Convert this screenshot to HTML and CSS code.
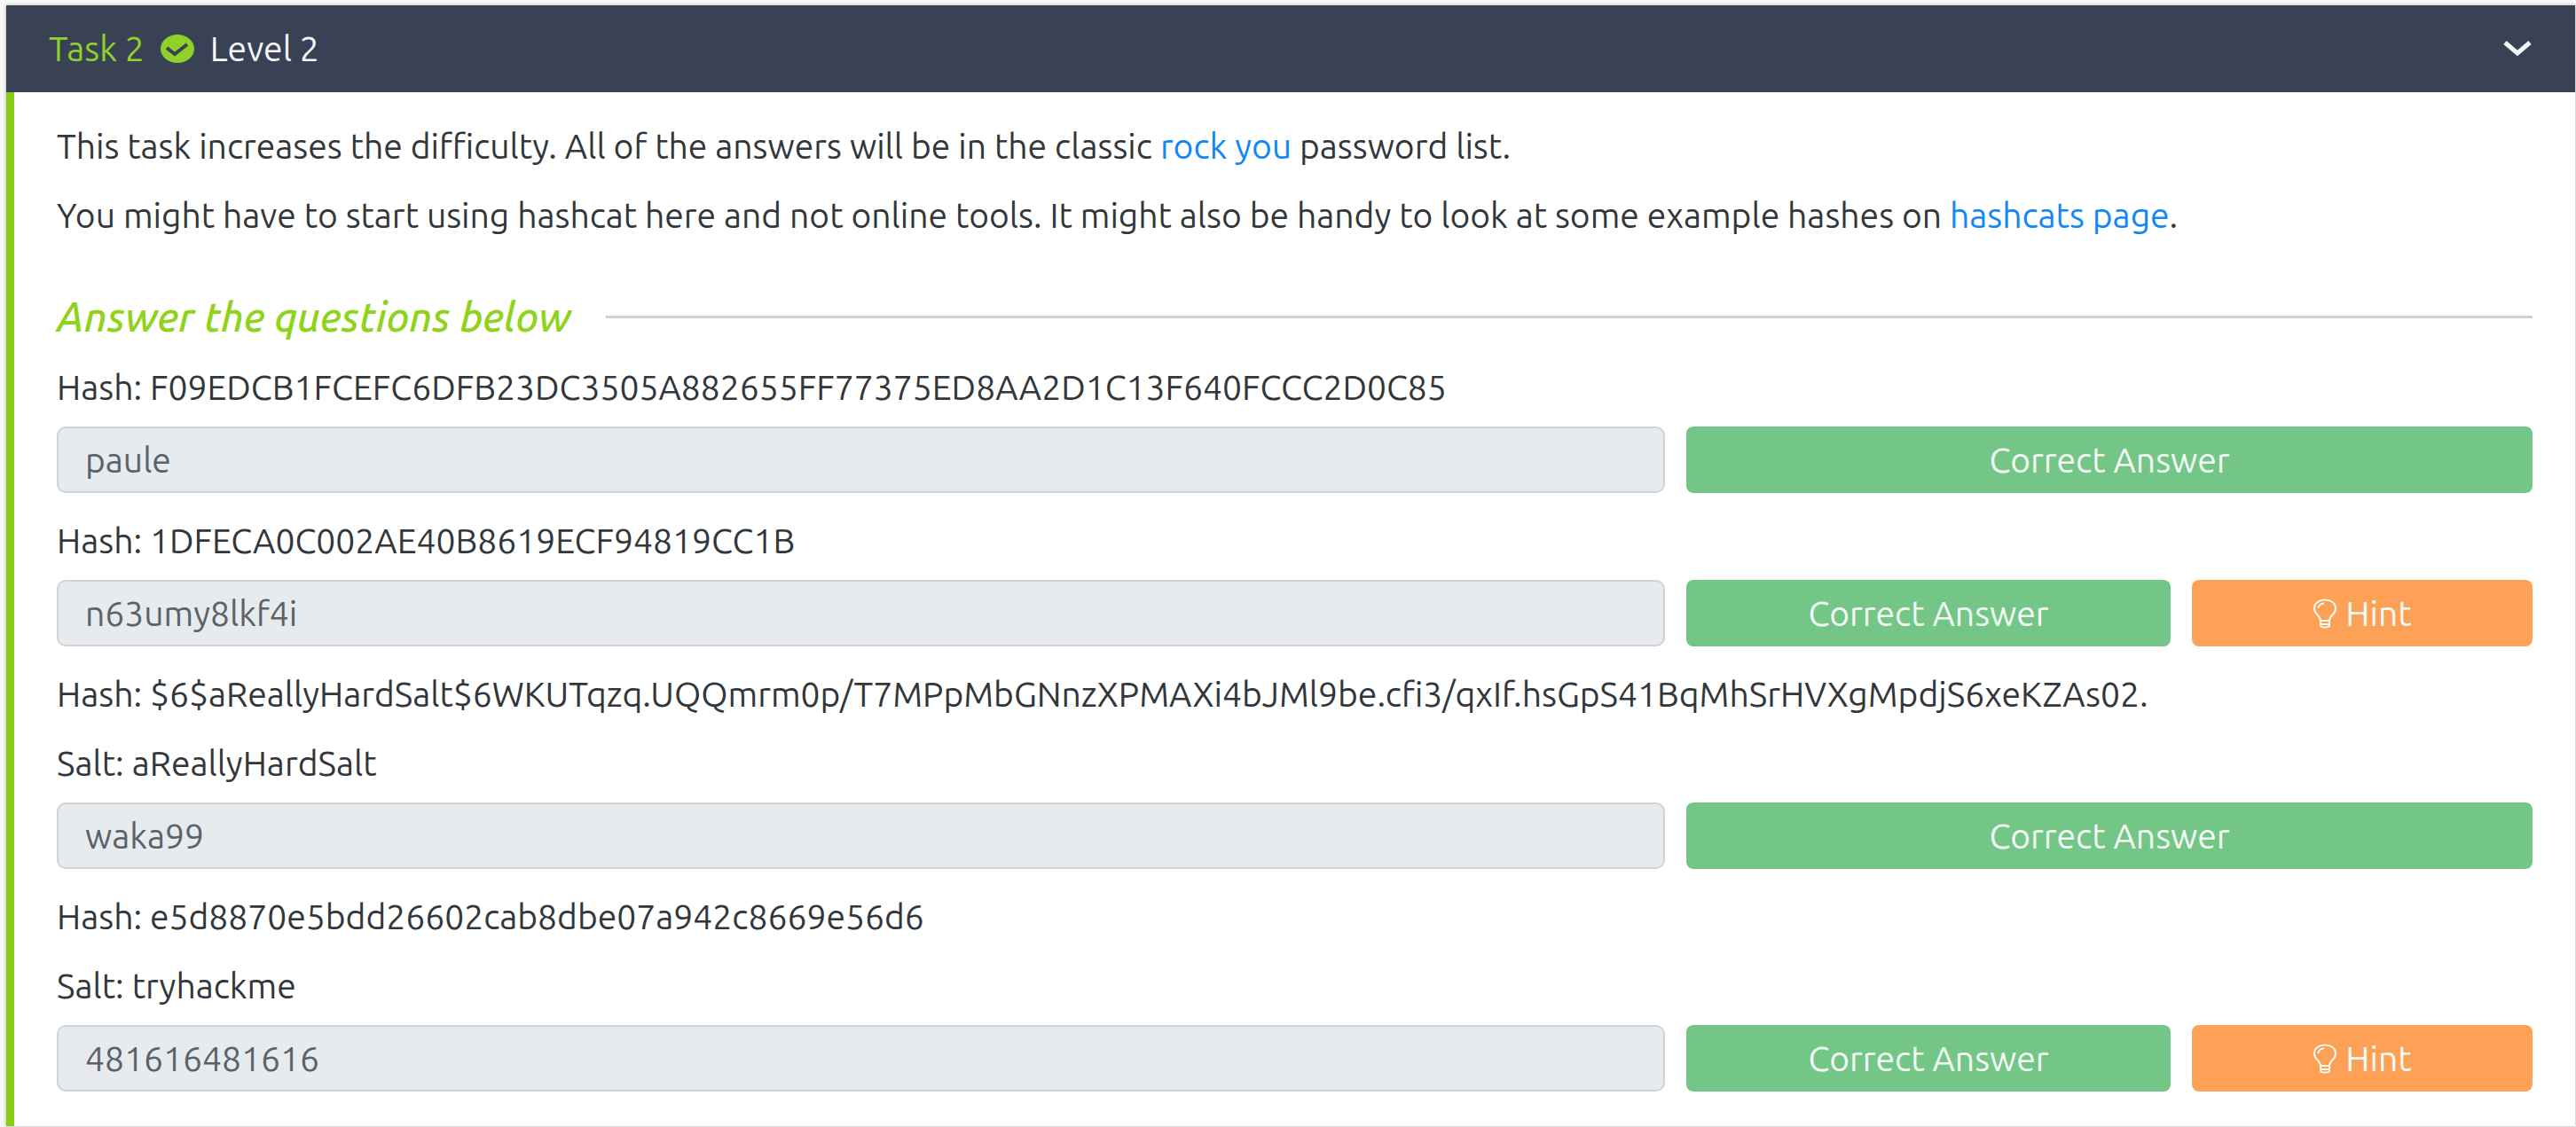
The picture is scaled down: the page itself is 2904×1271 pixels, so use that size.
FILE: index.html
```html
<!DOCTYPE html>
<html lang="en">
<head>
<meta charset="utf-8">
<title>Task 2 - Level 2</title>
<link rel="stylesheet" href="styles.css">
</head>
<body>
<svg class="sprite" aria-hidden="true">
  <symbol id="bulb" viewBox="0 0 28 34">
    <path d="M9 25C9 19 2 18 2 11.500C2 5 7.500 1.500 14 1.500S26 5 26 11.500C26 18 19 19 19 25ZM9 25v5.500q0 2 5 2t5-2V25M9 29h10M6.500 11C6.500 8 9 5.500 13 5.500" fill="none" stroke="currentColor" stroke-width="2"/>
  </symbol>
</svg>
<main class="task">
  <header class="task-header">
    <h1 class="task-title">
      <span class="task-number">Task 2</span>
      <svg class="check" viewBox="0 0 40 32" aria-hidden="true"><ellipse cx="20" cy="16" rx="19" ry="16" fill="currentColor"/><path d="M8 15l9 7 14-11" fill="none" stroke="#384254" stroke-width="4"/></svg>
      <span>Level 2</span>
    </h1>
    <button class="toggle" type="button" aria-label="Collapse task"><svg class="chevron" viewBox="0 0 34 20" aria-hidden="true"><path d="M3 3l14 12L31 3" fill="none" stroke="currentColor" stroke-width="5"/></svg></button>
  </header>
  <div class="task-body">
    <p class="text">This task increases the difficulty. All of the answers will be in the classic <a href="#rockyou">rock you</a> password list.</p>
    <p class="text">You might have to start using hashcat here and not online tools. It might also be handy to look at some example hashes on <a href="#hashcat">hashcats page</a>.</p>
    <h2 class="divider">Answer the questions below</h2>

    <form class="question">
      <label class="text" for="q1">Hash: F09EDCB1FCEFC6DFB23DC3505A882655FF77375ED8AA2D1C13F640FCCC2D0C85</label>
      <div class="row">
        <input class="answer" id="q1" value="paule" readonly>
        <div class="actions"><button class="btn correct" type="button">Correct Answer</button></div>
      </div>
    </form>

    <form class="question">
      <label class="text" for="q2">Hash: 1DFECA0C002AE40B8619ECF94819CC1B</label>
      <div class="row">
        <input class="answer" id="q2" value="n63umy8lkf4i" readonly>
        <div class="actions with-hint"><button class="btn correct" type="button">Correct Answer</button><button class="btn hint" type="button"><svg class="bulb" aria-hidden="true"><use href="#bulb"/></svg>Hint</button></div>
      </div>
    </form>

    <form class="question">
      <label class="text" for="q3">Hash: $6$aReallyHardSalt$6WKUTqzq.UQQmrm0p/T7MPpMbGNnzXPMAXi4bJMl9be.cfi3/qxIf.hsGpS41BqMhSrHVXgMpdjS6xeKZAs02.</label>
      <p class="text">Salt: aReallyHardSalt</p>
      <div class="row">
        <input class="answer" id="q3" value="waka99" readonly>
        <div class="actions"><button class="btn correct" type="button">Correct Answer</button></div>
      </div>
    </form>

    <form class="question">
      <label class="text" for="q4">Hash: e5d8870e5bdd26602cab8dbe07a942c8669e56d6</label>
      <p class="text">Salt: tryhackme</p>
      <div class="row">
        <input class="answer" id="q4" value="481616481616" readonly>
        <div class="actions with-hint"><button class="btn correct" type="button">Correct Answer</button><button class="btn hint" type="button"><svg class="bulb" aria-hidden="true"><use href="#bulb"/></svg>Hint</button></div>
      </div>
    </form>
  </div>
</main>
</body>
</html>
```
FILE: styles.css
```css
* { box-sizing: border-box; }
body {
  margin: 0;
  padding: 6px 1px 1px 7px;
  background: #f8f8f8;
  color: #32373c;
  font: 39px/48px Ubuntu, "DejaVu Sans", sans-serif;
}
.sprite { display: none; }
.task { background: #fff; box-shadow: 0 0 4px rgba(0, 0, 0, 0.3); }
.task-header {
  display: flex;
  justify-content: space-between;
  align-items: center;
  height: 98px;
  padding: 0 48px;
  background: #384254;
  color: #f5f6f8;
}
.task-title { display: flex; align-items: center; gap: 17px; margin: 0; font-size: 39px; font-weight: 400; }
.task-number, .check { color: #8fd12a; }
.check { width: 40px; height: 32px; }
.toggle { display: flex; padding: 0; border: 0; background: none; color: inherit; }
.chevron { width: 34px; height: 20px; }
.task-body { padding: 37px 48px 39px; border-left: 9px solid #88cc14; }
.text { display: block; margin: 0 0 30px; }
a { color: #1287f5; text-decoration: none; }
.divider {
  display: flex;
  align-items: center;
  gap: 40px;
  margin: 66px 0 32px;
  color: #90d31c;
  font-size: 46px;
  font-weight: 500;
  font-style: italic;
}
.divider::after { content: ""; flex: 1; height: 3px; background: #d0d0d0; }
.question + .question { margin-top: 30px; }
.row { display: grid; grid-template-columns: 1813fr 954fr; gap: 24px; margin-top: -10px; }
.answer {
  width: 100%;
  min-width: 0;
  height: 75px;
  padding: 0 30px;
  border: 2px solid #ced4da;
  border-radius: 10px;
  background: #e7ebee;
  color: #5b626a;
  font: inherit;
}
.actions { display: grid; gap: 24px; }
.with-hint { grid-template-columns: 546fr 384fr; }
.btn {
  display: flex;
  align-items: center;
  justify-content: center;
  gap: 9px;
  height: 75px;
  padding: 0;
  border: 0;
  border-radius: 8px;
  color: #f3faf5;
  font: inherit;
}
.correct { background: #73c686; }
.hint { background: #fda156; }
.bulb { width: 28px; height: 34px; }
```
